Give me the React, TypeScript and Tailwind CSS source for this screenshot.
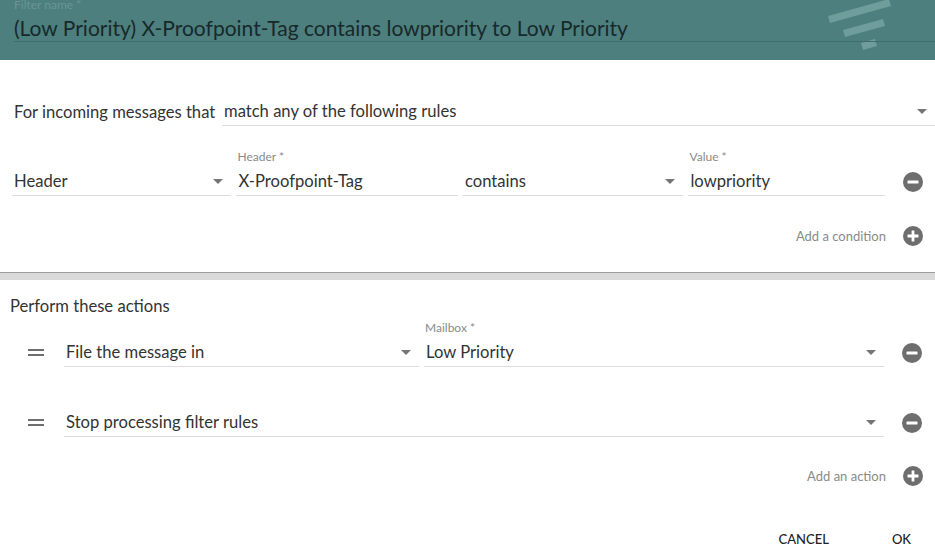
import React from 'react';

const Arrow = () => (
    <svg width="10" height="5" viewBox="0 0 10 5" className="shrink-0"><path d="M0 0h10L5 5z" fill="#757575" /></svg>
);

const RoundIcon = ({ plus }: { plus?: boolean }) => (
    <svg width="20" height="20" viewBox="0 0 20 20" className="shrink-0">
        <circle cx="10" cy="10" r="10" fill="#6e6e6e" />
        <rect x="4.5" y="8.6" width="11" height="2.8" rx="0.5" fill="#fff" />
        {plus && <rect x="8.6" y="4.5" width="2.8" height="11" rx="0.5" fill="#fff" />}
    </svg>
);

const Handle = () => (
    <div className="w-[16px] flex flex-col gap-[3px]">
        <div className="h-[2px] bg-[#6e6e6e]" />
        <div className="h-[2px] bg-[#6e6e6e]" />
    </div>
);

function Select({ value, className }: { value: string; className: string }) {
    return (
        <div className={`flex items-center justify-between border-b border-[#dcdcdc] h-[29px] pl-[2px] pr-[8px] ${className}`}>
            <span className="truncate">{value}</span>
            <Arrow />
        </div>
    );
}

function Field({ label, value, className, arrow }: { label?: string; value: string; className: string; arrow?: boolean }) {
    return (
        <div className={`flex flex-col ${className}`}>
            <div className="h-[16px] mb-[2px] text-[12px] leading-[16px] text-[#8a8a8a] pl-[1px]">{label ? `${label} *` : ''}</div>
            <div className="flex items-center justify-between border-b border-[#dcdcdc] h-[29px] pl-[2px] pr-[8px]">
                <span className="truncate">{value}</span>
                {arrow && <Arrow />}
            </div>
        </div>
    );
}

export default function App() {
    return (
        <div className="w-[935px] h-[553px] overflow-hidden bg-white text-[#333] text-[16.6px] leading-[24px] font-['Lato','Open_Sans',sans-serif]">
            {/* Header */}
            <div className="relative h-[60px] bg-[#4d7f7e] pl-[14px] overflow-hidden">
                <svg className="absolute right-[40px] top-0" width="72" height="52" viewBox="0 0 72 52">
                    <polygon points="5,16 66,-1 68,6 7,23" fill="#6f9d9b" />
                    <polygon points="20,30 60,19 62,26 22,37" fill="#6f9d9b" />
                    <polygon points="38,43 52,39 54,46 40,50" fill="#6f9d9b" />
                </svg>
                <div className="relative text-[12px] leading-[12px] text-[#6a9595] -mt-[1px]">Filter name *</div>
                <div className="relative h-[32px] flex items-center text-[21px] text-[#17292a] border-b border-[#3f6c6c] mt-[-1px] pt-[4px]">
                    (Low Priority) X-Proofpoint-Tag contains lowpriority to Low Priority
                </div>
            </div>

            {/* Conditions */}
            <div className="h-[212px] pt-[37px]">
                <div className="flex items-end pl-[14px]">
                    <div className="h-[29px] flex items-center w-[208px] shrink-0">For incoming messages that</div>
                    <Select value="match any of the following rules" className="flex-1" />
                </div>
                <div className="flex items-end mt-[23px] pl-[12px] pr-[12px] gap-[5px]">
                    <Field value="Header" arrow className="w-[220px]" />
                    <Field label="Header" value="X-Proofpoint-Tag" className="w-[222px]" />
                    <Field value="contains" arrow className="w-[221px]" />
                    <Field label="Value" value="lowpriority" className="w-[197px]" />
                    <div className="h-[29px] flex items-center pl-[13px]"><RoundIcon /></div>
                </div>
                <div className="flex items-center justify-end pr-[12px] mt-[28px] gap-[17px] text-[13px] text-[#8a8a8a]">
                    <span>Add a condition</span>
                    <RoundIcon plus />
                </div>
            </div>

            {/* Separator */}
            <div className="h-[8px] bg-[#d9d9d9] border-t border-[#9c9c9c]" />

            {/* Actions */}
            <div className="pt-[14px]">
                <div className="pl-[10px]">Perform these actions</div>
                <div className="flex items-end mt-[2px] pl-[28px] pr-[12px]">
                    <div className="h-[29px] flex items-center w-[36px]"><Handle /></div>
                    <Field value="File the message in" arrow className="w-[355px]" />
                    <Field label="Mailbox" value="Low Priority" arrow className="w-[460px] ml-[5px]" />
                    <div className="h-[29px] flex items-center pl-[18px]"><RoundIcon /></div>
                </div>
                <div className="flex items-end mt-[41px] pl-[28px] pr-[12px]">
                    <div className="h-[29px] flex items-center w-[36px]"><Handle /></div>
                    <Select value="Stop processing filter rules" className="w-[820px]" />
                    <div className="h-[29px] flex items-center pl-[18px]"><RoundIcon /></div>
                </div>
                <div className="flex items-center justify-end pr-[12px] mt-[27px] gap-[17px] text-[13px] text-[#8a8a8a]">
                    <span>Add an action</span>
                    <RoundIcon plus />
                </div>
                <div className="flex justify-end items-center mt-[41px] pr-[24px] text-[13px] leading-[20px] text-[#222] font-medium">
                    <span>CANCEL</span>
                    <span className="ml-[63px]">OK</span>
                </div>
            </div>
        </div>
    );
}
